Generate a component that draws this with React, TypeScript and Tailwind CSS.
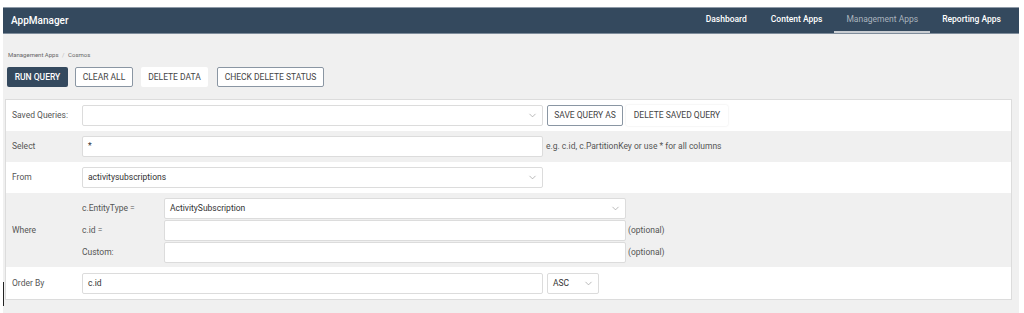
import { ChevronDown } from 'lucide-react';

const font = { fontFamily: 'Roboto, "Liberation Sans", sans-serif' };

function Chevron() {
  return <ChevronDown className="w-[11px] h-[11px] text-[#9a9a9a]" strokeWidth={1.5} />;
}

function Select({ value, width }: { value?: string; width: string }) {
  return (
    <div className={`${width} h-[21px] bg-white border border-[#dcdcdc] rounded-[2px] flex items-center justify-between pl-[5px] pr-[4px] text-[8.5px] text-[#333]`}>
      <span>{value}</span>
      <Chevron />
    </div>
  );
}

function Input({ value, width }: { value?: string; width: string }) {
  return (
    <div className={`${width} h-[21px] bg-white border border-[#dcdcdc] rounded-[2px] flex items-center pl-[5px] text-[8.5px] text-[#333]`}>
      {value}
    </div>
  );
}

export default function App() {
  const nav = ['Dashboard', 'Content Apps', 'Management Apps', 'Reporting Apps'];
  return (
    <div className="w-[1024px] h-[313px] bg-white pt-[7px] pl-[3px] pr-[5px] relative overflow-hidden" style={font}>
      <div className="bg-[#f0f0f0] h-[306px]">
        {/* header */}
        <div className="h-[27px] bg-[#34495e] border-t border-[#8e9aa7] border-b border-b-[#7e8c9b] flex items-stretch">
          <div className="pl-[8px] flex items-center text-white text-[10px] font-medium">AppManager</div>
          <div className="ml-auto flex items-stretch pr-[6px]">
            {nav.map((n) => (
              <div
                key={n}
                className={`flex items-center px-[12px] text-[8.5px] font-medium border-b-[2px] ${
                  n === 'Management Apps' ? 'text-[#a9b3bd] border-[#c9cdd2] font-normal' : 'text-white border-transparent'
                }`}
              >
                {n}
              </div>
            ))}
          </div>
        </div>

        <div className="pl-[4px] pr-[7px]">
          <div className="pt-[16px] pl-[1px] text-[6px] text-[#666]">
            Management Apps <span className="text-[#bbb] mx-[2px]">/</span> Cosmos
          </div>

          {/* toolbar */}
          <div className="flex mt-[8px]">
            <button className="h-[20px] w-[61px] bg-[#34495e] text-white text-[8.5px] font-medium rounded-[2px]">RUN QUERY</button>
            <button className="h-[20px] w-[58px] ml-[7px] bg-white text-[#444] text-[8.5px] border border-[#8a96a3] rounded-[2px]">CLEAR ALL</button>
            <button className="h-[20px] w-[67px] ml-[8px] bg-white text-[#444] text-[8.5px] rounded-[2px]">DELETE DATA</button>
            <button className="h-[20px] w-[107px] ml-[9px] bg-white text-[#444] text-[8.5px] border border-[#8a96a3] rounded-[2px]">CHECK DELETE STATUS</button>
          </div>

          {/* query panel */}
          <div className="mt-[12px] ml-[-2px] w-[1007px] bg-white border border-[#dcdcdc] text-[8.5px] text-[#555]">
            <div className="h-[31px] flex items-center">
              <div className="w-[76px] pl-[6px]">Saved Queries:</div>
              <Select width="w-[461px]" />
              <button className="ml-[4px] h-[21px] w-[76px] bg-white text-[#444] border border-[#8a96a3] rounded-[2px]">SAVE QUERY AS</button>
              <button className="ml-[3px] h-[21px] w-[102px] bg-white text-[#444] rounded-[2px] shadow-[0_0_2px_rgba(0,0,0,0.12)]">DELETE SAVED QUERY</button>
            </div>

            <div className="h-[31px] flex items-center bg-[#f0f0f0]">
              <div className="w-[76px] pl-[6px]">Select</div>
              <Input value="*" width="w-[461px]" />
              <div className="ml-[3px] text-[#555]">e.g. c.id, c.PartitionKey or use * for all columns</div>
            </div>

            <div className="h-[31px] flex items-center">
              <div className="w-[76px] pl-[6px]">From</div>
              <Select value="activitysubscriptions" width="w-[461px]" />
            </div>

            <div className="h-[74px] flex items-center bg-[#f0f0f0]">
              <div className="w-[76px] pl-[6px]">Where</div>
              <div className="flex flex-col gap-[1px]">
                <div className="flex items-center">
                  <div className="w-[82px]">c.EntityType =</div>
                  <Select value="ActivitySubscription" width="w-[462px]" />
                </div>
                <div className="flex items-center">
                  <div className="w-[82px]">c.id =</div>
                  <Input width="w-[462px]" />
                  <div className="ml-[2px] text-[#555]">(optional)</div>
                </div>
                <div className="flex items-center">
                  <div className="w-[82px]">Custom:</div>
                  <Input width="w-[462px]" />
                  <div className="ml-[2px] text-[#555]">(optional)</div>
                </div>
              </div>
            </div>

            <div className="h-[32px] flex items-center">
              <div className="w-[76px] pl-[6px]">Order By</div>
              <Input value="c.id" width="w-[461px]" />
              <div className="ml-[4px]">
                <Select value="ASC" width="w-[52px]" />
              </div>
            </div>
          </div>
        </div>
      </div>
      <div className="absolute left-[3px] top-[282px] w-[1px] h-[24px] bg-[#222]" />
    </div>
  );
}
